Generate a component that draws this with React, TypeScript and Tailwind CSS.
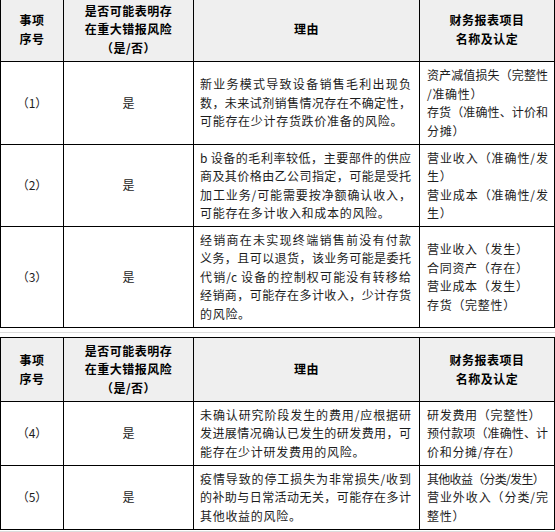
const font = "font-['Noto_Sans_CJK_SC',sans-serif]"

type Row = {
  no: string
  reason: string[]
  items: string[][]
}

// a line that starts with "!" is set tight so it stays in its cell
const table1: Row[] = [
  {
    no: "（1）",
    reason: [
      "新业务模式导致设备销售毛利出现负",
      "数，未来试剂销售情况存在不确定性，",
      "可能存在少计存货跌价准备的风险。",
    ],
    items: [
      ["资产减值损失（完整性", "/准确性）"],
      ["存货（准确性、计价和", "分摊）"],
    ],
  },
  {
    no: "（2）",
    reason: [
      "b 设备的毛利率较低，主要部件的供应",
      "商及其价格由乙公司指定，可能是受托",
      "加工业务/可能需要按净额确认收入，",
      "可能存在多计收入和成本的风险。",
    ],
    items: [
      ["营业收入（准确性/发", "生）"],
      ["营业成本（准确性/发", "生）"],
    ],
  },
  {
    no: "（3）",
    reason: [
      "经销商在未实现终端销售前没有付款",
      "义务，且可以退货，该业务可能是委托",
      "代销/c 设备的控制权可能没有转移给",
      "经销商，可能存在多计收入，少计存货",
      "的风险。",
    ],
    items: [["营业收入（发生）"], ["合同资产（存在）"], ["营业成本（发生）"], ["存货（完整性）"]],
  },
]

const table2: Row[] = [
  {
    no: "（4）",
    reason: [
      "未确认研究阶段发生的费用/应根据研",
      "发进展情况确认已发生的研发费用，可",
      "能存在少计研发费用的风险。",
    ],
    items: [["研发费用（完整性）"], ["预付款项（准确性、计", "价和分摊/存在）"]],
  },
  {
    no: "（5）",
    reason: [
      "疫情导致的停工损失为非常损失/收到",
      "的补助与日常活动无关，可能存在多计",
      "其他收益的风险。",
    ],
    items: [["!其他收益（分类/发生）"], ["营业外收入（分类/完", "整性）"]],
  },
]

function Lines({ lines }: { lines: string[] }) {
  return (
    <>
      {lines.map((line, i) => {
        if (line.startsWith("!")) {
          return (
            <div key={i} className="whitespace-nowrap tracking-[-0.7px]">
              {line.slice(1)}
            </div>
          )
        }
        return i < lines.length - 1 ? (
          <div key={i} className="text-justify [text-align-last:justify]">
            {line}
          </div>
        ) : (
          <div key={i} className="whitespace-nowrap tracking-[0.7px]">
            {line}
          </div>
        )
      })}
    </>
  )
}

const cell = "flex flex-col justify-center border-r border-b border-black"
const head = `${cell} items-center bg-[#efefef] font-bold tracking-[0.5px] text-black`

function Header() {
  return (
    <>
      <div className={head}>
        <div>事项</div>
        <div>序号</div>
      </div>
      <div className={head}>
        <div>是否可能表明存</div>
        <div>在重大错报风险</div>
        <div>（是/否）</div>
      </div>
      <div className={head}>
        <div>理由</div>
      </div>
      <div className={head}>
        <div>财务报表项目</div>
        <div>名称及认定</div>
      </div>
    </>
  )
}

function Table({ rows, gridRows }: { rows: Row[]; gridRows: string }) {
  return (
    <div className={`grid grid-cols-[63px_130px_226px_135px] border-l border-t border-black ${gridRows}`}>
      <Header />
      {rows.map((row) => (
        <div key={row.no} className="contents">
          <div className={`${cell} items-center`}>{row.no}</div>
          <div className={`${cell} items-center`}>是</div>
          <div className={`${cell} pl-[6px] pr-[8px]`}>
            <Lines lines={row.reason} />
          </div>
          <div className={`${cell} pl-[7px] pr-[6px]`}>
            {row.items.map((p, i) => (
              <Lines key={i} lines={p} />
            ))}
          </div>
        </div>
      ))}
    </div>
  )
}

export default function App() {
  return (
    <div className={`h-[532px] w-[555px] overflow-hidden bg-white text-[12px] leading-[18.5px] text-[#1c1c1c] ${font}`}>
      <div className="-mt-[3px]">
        <Table rows={table1} gridRows="grid-rows-[64px_83px_82px_101px]" />
      </div>
      <div className="mt-[4px] h-px bg-[#dcdcdc]" />
      <div className="mt-[4px]">
        <Table rows={table2} gridRows="grid-rows-[64px_64px_64px]" />
      </div>
      <div className="mt-px h-px bg-[#dcdcdc]" />
    </div>
  )
}
